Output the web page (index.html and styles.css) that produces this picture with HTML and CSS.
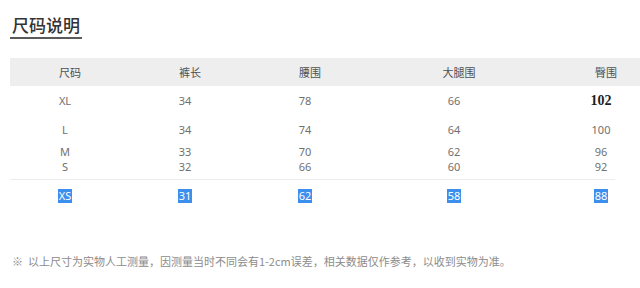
FILE: index.html
```html
<!DOCTYPE html>
<html lang="zh">
<head>
<meta charset="utf-8">
<link rel="stylesheet" href="styles.css">
</head>
<body>
<div class="page">
  <h2 class="title">尺码说明</h2>
  <div class="table">
    <div class="row head">
      <div class="cell">尺码</div><div class="cell">裤长</div><div class="cell">腰围</div><div class="cell">大腿围</div><div class="cell">臀围</div>
    </div>
    <div class="row r-xl">
      <div class="cell">XL</div><div class="cell">34</div><div class="cell">78</div><div class="cell">66</div><div class="cell"><span class="bold">102</span></div>
    </div>
    <div class="row r-l">
      <div class="cell">L</div><div class="cell">34</div><div class="cell">74</div><div class="cell">64</div><div class="cell">100</div>
    </div>
    <div class="row r-m">
      <div class="cell">M</div><div class="cell">33</div><div class="cell">70</div><div class="cell">62</div><div class="cell">96</div>
    </div>
    <div class="row r-s">
      <div class="cell">S</div><div class="cell">32</div><div class="cell">66</div><div class="cell">60</div><div class="cell">92</div>
    </div>
    <div class="row r-xs">
      <div class="cell"><span class="sel">XS</span></div><div class="cell"><span class="sel">31</span></div><div class="cell"><span class="sel">62</span></div><div class="cell"><span class="sel">58</span></div><div class="cell"><span class="sel">88</span></div>
    </div>
  </div>
  <p class="note">※&nbsp; 以上尺寸为实物人工测量，因测量当时不同会有1-2cm误差，相关数据仅作参考，以收到实物为准。</p>
</div>
</body>
</html>
```
FILE: styles.css
```css
html, body {
  margin: 0;
  padding: 0;
  background: #ffffff;
}
.page {
  width: 640px;
  height: 288px;
  overflow: hidden;
  font-family: "Noto Sans", "Noto Sans CJK SC", sans-serif;
}
.title {
  display: inline-block;
  margin: 15px 0 0 10px;
  padding: 0 2px 2px 2px;
  font-family: "Noto Sans CJK SC", sans-serif;
  font-size: 17px;
  line-height: 20px;
  font-weight: 500;
  color: #333333;
  border-bottom: 2px solid #5a5a5a;
}
.table {
  margin: 19px 0 0 10px;
  width: 630px;
}
.row {
  display: grid;
  grid-template-columns: 110px 130px 110px 188px 106px;
  align-items: center;
  font-size: 11px;
  color: #707070;
}
.cell {
  text-align: center;
  white-space: nowrap;
}
.head {
  height: 28px;
  background: #eeeeee;
  color: #505050;
  font-family: "Noto Sans CJK SC", sans-serif;
}
.head .cell {
  padding-left: 10px;
}
.r-xl { height: 29px; }
.r-l { height: 28px; }
.r-m { height: 16px; }
.r-s {
  height: 21px;
  align-items: start;
  width: 605px;
  border-bottom: 1px solid #ececec;
  box-sizing: border-box;
}
.r-s .cell { line-height: 16px; }
.r-xs { height: 30px; }
.bold {
  font-family: "Liberation Serif", serif;
  font-weight: bold;
  font-size: 14px;
  color: #1e1e1e;
}
.sel {
  display: inline-block;
  background: #3d8fec;
  color: #ffffff;
  line-height: 14px;
  padding: 0 1px;
}
.note {
  margin: 43px 0 0 12px;
  font-family: "Noto Sans CJK SC", sans-serif;
  font-size: 11px;
  line-height: 16px;
  color: #8c8c8c;
}
```
